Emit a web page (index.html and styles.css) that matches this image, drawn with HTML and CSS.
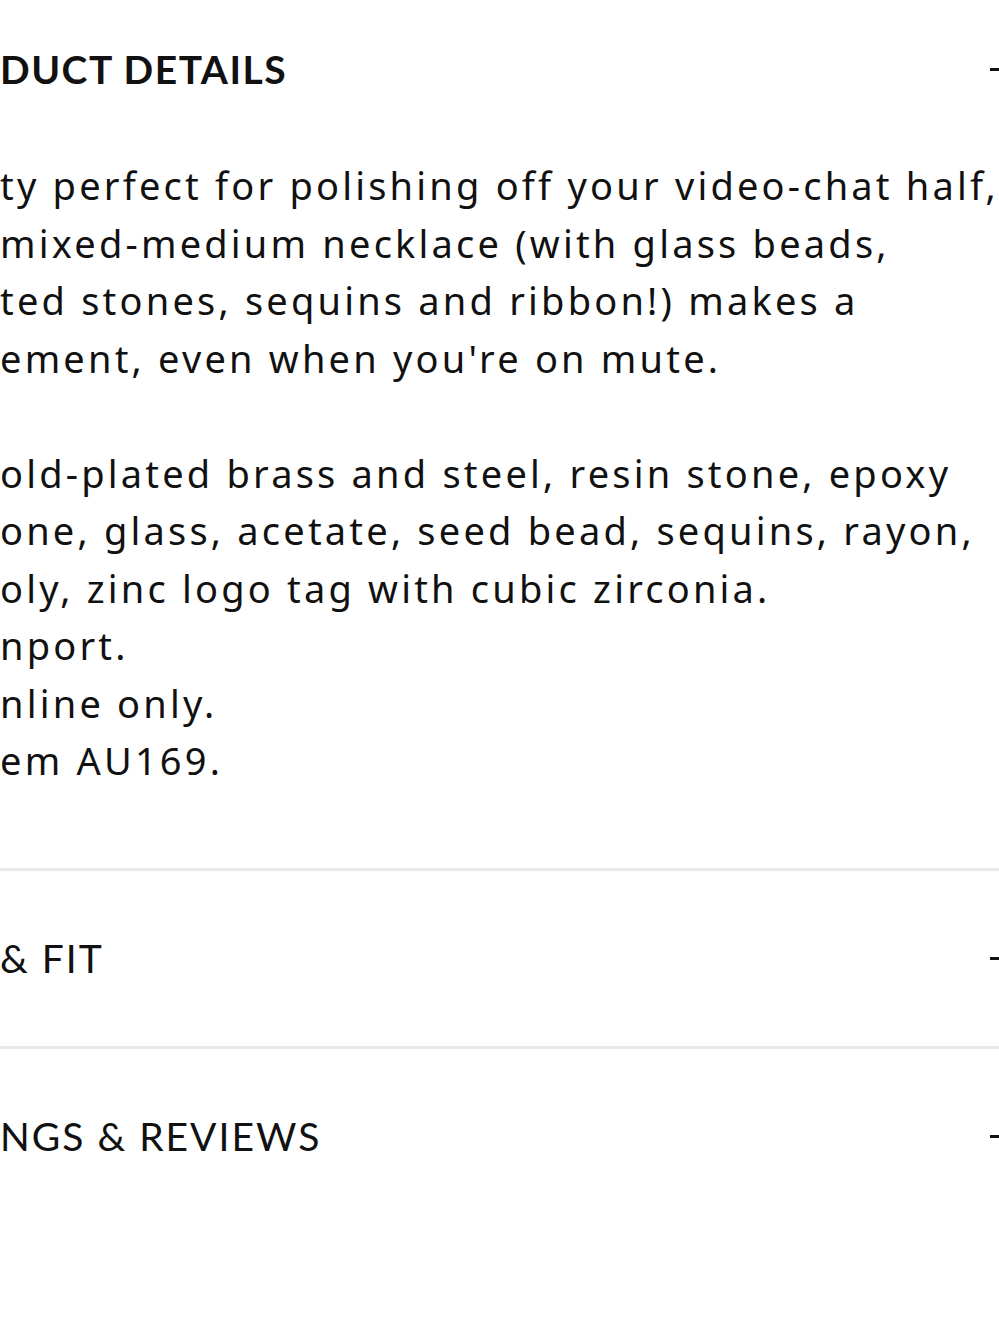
FILE: index.html
```html
<!DOCTYPE html>
<html lang="en">
<head>
    <meta charset="UTF-8">
    <meta name="viewport" content="width=device-width, initial-scale=1.0">
    <title>Product Details</title>
    <link rel="stylesheet" href="styles.css">
</head>
<body>
    <div class="page">
        <!-- Product details (open) -->
        <section class="panel open">
            <div class="panel-head">
                <h3>DUCT DETAILS</h3>
                <span class="toggle"></span>
            </div>
            <div class="panel-body">
                <p class="copy">
                    <span class="line">ty perfect for polishing off your video-chat half,</span>
                    <span class="line">mixed-medium necklace (with glass beads,</span>
                    <span class="line">ted stones, sequins and ribbon!) makes a</span>
                    <span class="line">ement, even when you're on mute.</span>
                </p>
                <ul class="specs">
                    <li>
                        <span class="line">old-plated brass and steel, resin stone, epoxy</span>
                        <span class="line">one, glass, acetate, seed bead, sequins, rayon,</span>
                        <span class="line">oly, zinc logo tag with cubic zirconia.</span>
                    </li>
                    <li>nport.</li>
                    <li>nline only.</li>
                    <li>em AU169.</li>
                </ul>
            </div>
        </section>

        <section class="panel">
            <div class="panel-head">
                <h3>&amp; FIT</h3>
                <span class="toggle"></span>
            </div>
        </section>

        <section class="panel">
            <div class="panel-head">
                <h3>NGS &amp; REVIEWS</h3>
                <span class="toggle"></span>
            </div>
        </section>
    </div>
</body>
</html>
```

FILE: styles.css
```css
/* Reset & Base Styles */
* {
    box-sizing: border-box;
    margin: 0;
    padding: 0;
}

body {
    background: #ffffff;
    color: #111;
    font-family: 'Lato', 'Noto Sans', sans-serif;
    overflow: hidden;
}

.page {
    width: 1030px;
}

/* Accordion Panels */
.panel {
    border-bottom: 3px solid #e8e8e8;
}

.panel:last-child {
    border-bottom: none;
}

.panel-head {
    display: flex;
    align-items: center;
    justify-content: space-between;
    height: 175px;
    padding-right: 16px;
}

.panel.open .panel-head {
    height: 138px;
}

.panel-head h3 {
    font-size: 39px;
    font-weight: 400;
    letter-spacing: 2px;
    line-height: 1;
}

.panel.open .panel-head h3 {
    font-weight: 700;
    letter-spacing: 1.5px;
}

.toggle {
    display: block;
    width: 24px;
    height: 3px;
    background-color: #111;
}

/* Product Copy */
.panel-body {
    padding-top: 19px;
    padding-bottom: 78px;
    font-family: 'Noto Sans', 'Open Sans', sans-serif;
    font-size: 38px;
    line-height: 57.5px;
    letter-spacing: 3.2px;
}

.line {
    display: block;
    white-space: nowrap;
}

.copy {
    margin-bottom: 57.5px;
}

.specs {
    list-style: none;
}
```
